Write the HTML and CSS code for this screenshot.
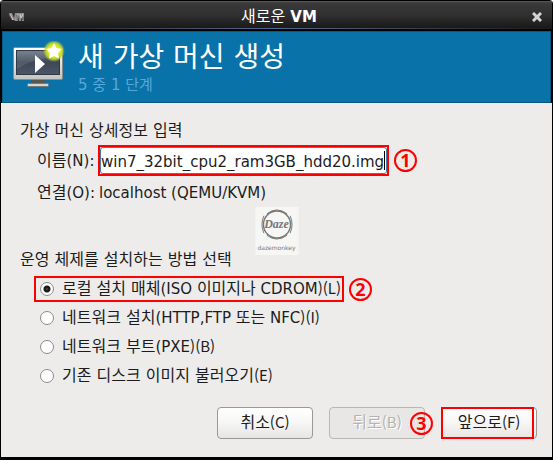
FILE: index.html
```html
<!DOCTYPE html>
<html lang="ko">
<head>
    <meta charset="UTF-8" />
    <meta name="viewport" content="width=device-width, initial-scale=1.0"/>
    <title>새로운 VM</title>
    <link rel="stylesheet" href="styles.css">
</head>
<body>

    <div class="window">
        <!-- Title bar -->
        <div class="titlebar">
            <svg class="app-icon" width="18" height="12" viewBox="0 0 18 12" fill="none">
                <path d="M1 2h3l2 5 1-5h9v8h-2V5l-1 5h-2l-1-5v5H7L6 9H4z" fill="#8b8b8b"/>
                <path d="M2 3l3 6M8 9l2-6M12 3l1 4 2-4" stroke="#cfcfcf"/>
                <path d="M1 3l2 4" stroke="#a5505f"/>
                <path d="M9 4v5M15 6v3" stroke="#555"/>
            </svg>
            <div class="window-title">새로운 <b>VM</b></div>
            <button class="close" type="button" aria-label="닫기">
                <svg width="10" height="10" viewBox="0 0 10 10">
                    <path d="M1 1L9 9M9 1L1 9" stroke="#d4d4d4" stroke-width="3"/>
                </svg>
            </button>
        </div>

        <!-- Wizard header -->
        <div class="header">
            <svg class="monitor" width="54" height="50" viewBox="0 0 54 50">
                <defs>
                    <linearGradient id="frame" x1="0" y1="0" x2="0" y2="1">
                        <stop offset="0" stop-color="#ffffff"/>
                        <stop offset="1" stop-color="#c4c4c0"/>
                    </linearGradient>
                    <linearGradient id="screen" x1="0" y1="0" x2="0" y2="1">
                        <stop offset="0" stop-color="#6a7482"/>
                        <stop offset="0.5" stop-color="#3e4857"/>
                        <stop offset="1" stop-color="#4b5666"/>
                    </linearGradient>
                    <radialGradient id="glow">
                        <stop offset="0.5" stop-color="#e6ec1c"/>
                        <stop offset="0.75" stop-color="#c0d52c" stop-opacity="0.9"/>
                        <stop offset="1" stop-color="#9cc840" stop-opacity="0"/>
                    </radialGradient>
                </defs>
                <path d="M18 39h14v4H18z" fill="#555753"/>
                <rect x="14.5" y="42.5" width="21" height="3" rx="1" fill="#d5d5d2" stroke="#777974"/>
                <rect x="0.5" y="6.5" width="49" height="32" rx="1.5" fill="url(#frame)" stroke="#8a8c88"/>
                <rect x="3.5" y="9.5" width="43" height="24" fill="url(#screen)" stroke="#303846"/>
                <path d="M4 10h42v6Q22 16 4 28z" fill="#fff" opacity="0.1"/>
                <path d="M22 14L32 23L22 32z" fill="#fff"/>
                <circle cx="41" cy="10" r="11" fill="url(#glow)"/>
                <path d="M41 2l2.5 5 5.5 1-4 4 1 5.5-5-2.5-5 2.5 1-5.5-4-4 5.5-1z" fill="#fff"/>
            </svg>
            <div>
                <h1>새 가상 머신 생성</h1>
                <p class="step">5 중 1 단계</p>
            </div>
        </div>

        <form class="content">
            <h2>가상 머신 상세정보 입력</h2>
            <div class="row name-row">
                <label class="label" for="name">이름<span class="latin">(N):</span></label>
                <div class="highlight name-box">
                    <input id="name" type="text" value="win7_32bit_cpu2_ram3GB_hdd20.img">
                    <span class="caret"></span>
                </div>
                <span class="badge">1</span>
            </div>
            <div class="row">
                <span class="label">연결<span class="latin">(O):</span></span>
                <span class="latin connection">localhost (QEMU/KVM)</span>
            </div>

            <!-- Watermark -->
            <div class="watermark">
                <svg width="33" height="34" viewBox="0 0 33 34" fill="none" stroke="#777">
                    <circle cx="16.5" cy="17" r="14" stroke-width="1.5"/>
                    <path d="M6 6Q16 -2 27 6M6 28Q16 36 27 28M3 8Q-1 17 3 26M30 8Q34 17 30 26"/>
                </svg>
                <span class="script">Daze</span>
                <span class="brand">dazemonkey</span>
            </div>

            <h2 class="install-title">운영 체제를 설치하는 방법 선택</h2>
            <div class="options">
                <div class="row">
                    <label class="option highlight"><input type="radio" name="method" checked><span>로컬 설치 매체<span class="latin">(ISO </span>이미지나<span class="latin"> CDROM</span><span class="key">)(L)</span></span></label>
                    <span class="badge">2</span>
                </div>
                <label class="option"><input type="radio" name="method"><span>네트워크 설치<span class="latin">(HTTP,FTP </span>또는<span class="latin"> NFC</span><span class="key">)(I)</span></span></label>
                <label class="option"><input type="radio" name="method"><span>네트워크 부트<span class="latin">(PXE</span><span class="key">)(B)</span></span></label>
                <label class="option"><input type="radio" name="method"><span>기존 디스크 이미지 불러오기<span class="key">(E)</span></span></label>
            </div>

            <div class="actions">
                <button class="btn" type="button">취소<span class="key">(C)</span></button>
                <button class="btn" type="button" disabled>뒤로<span class="key">(B)</span></button>
                <div class="next">
                    <button class="btn" type="button">앞으로<span class="key">(F)</span></button>
                    <span class="badge">3</span>
                </div>
            </div>
        </form>
    </div>

</body>
</html>
```
FILE: styles.css
```css
:root {
    --bg: #edeceb;
    --header: #0872a9;
    --mark: #ff0000;
    --text: #1c1c1c;
}

* {
    box-sizing: border-box;
}

body {
    margin: 0;
    background: #fff;
    color: var(--text);
    font-family: "DejaVu Sans", "Noto Sans CJK KR", sans-serif;
    font-size: 16px;
    line-height: 24px;
}

h1, h2, p {
    margin: 0;
    font-weight: 400;
}

h2 {
    font-size: 16px;
    line-height: 24px;
}

/* Latin letters run a little smaller than the Hangul beside them */
.latin {
    font-size: 15px;
}

/* Shortcut letter with narrow brackets */
.key {
    font-family: "Noto Sans CJK KR", sans-serif;
    font-size: 15px;
    line-height: 20px;
}

.window {
    background: #000;
    border-radius: 4px 4px 0 0;
    padding: 1px 1px 3px;
    overflow: hidden;
}

/* Title bar */
.titlebar {
    display: flex;
    align-items: center;
    height: 30px;
    padding: 2px 10px 0 7px;
    background:
        linear-gradient(to right, #1a1a1a, #536b94 50%, #1a1a1a) 0 27px / 100% 1px no-repeat,
        linear-gradient(#5a5a5a 0, #3a3a3a 2px, #303030 14px, #191919 27px, #000 29px);
    color: #fff;
}

.window-title {
    flex: 1;
    text-align: center;
}

.window-title b {
    font-size: 15px;
}

.close {
    display: flex;
    padding: 0;
    border: 0;
    background: none;
}

/* Blue wizard header */
.header {
    display: flex;
    gap: 11px;
    height: 72px;
    margin: 0 1px;
    padding: 9px 10px;
    background: var(--header);
    border: 1px solid #075984;
    color: #fff;
}

h1 {
    font-size: 28px;
    line-height: 34px;
}

.step {
    color: #55a9da;
    font-size: 15px;
    line-height: 20px;
}

/* Form */
.content {
    position: relative;
    padding: 16px 15px 18px 19px;
    background: var(--bg);
}

.row {
    display: flex;
    align-items: center;
    gap: 5px;
}

.name-row {
    margin: 2px 0 5px;
}

.label {
    width: 73px;
    padding-left: 17px;
    white-space: nowrap;
}

.connection {
    padding-left: 1px;
}

.highlight {
    border: 2px solid var(--mark);
}

.name-box {
    display: flex;
    align-items: center;
    position: relative;
    width: 291px;
}

.name-box input {
    display: block;
    width: 100%;
    height: 27px;
    padding: 2px 3px 0 0;
    border: 1px solid #4a78ad;
    border-radius: 3px;
    outline: 0;
    background: #fff;
    color: var(--text);
    font-family: inherit;
    font-size: 15px;
}

.caret {
    position: absolute;
    right: 2px;
    width: 1px;
    height: 19px;
    background: #000;
}

.badge {
    display: flex;
    align-items: center;
    justify-content: center;
    width: 23px;
    height: 23px;
    padding-bottom: 1px;
    border: 2px solid var(--mark);
    border-radius: 50%;
    color: var(--mark);
    font-family: "Open Sans", sans-serif;
    font-size: 18px;
    font-weight: 700;
    line-height: 18px;
}

.watermark {
    position: absolute;
    top: 104px;
    left: 50%;
    display: flex;
    flex-direction: column;
    align-items: center;
    width: 43px;
    height: 48px;
    padding-top: 1px;
    transform: translateX(-50%);
    background: #f6f6f4;
    color: #777;
}

.script {
    position: absolute;
    top: 9px;
    font-family: "Liberation Serif", serif;
    font-size: 12px;
    font-style: italic;
    font-weight: 700;
    line-height: 16px;
}

.brand {
    font-size: 6px;
    line-height: 14px;
}

.install-title {
    margin-top: 43px;
}

.options {
    display: flex;
    flex-direction: column;
    gap: 3px;
    margin: 4px 0 18px 14px;
}

.option {
    display: flex;
    align-items: center;
    gap: 8px;
    height: 26px;
    padding: 0 6px;
    white-space: nowrap;
}

.option.highlight {
    width: 310px;
    padding: 0 0 0 4px;
}

.option input {
    flex: none;
    appearance: none;
    width: 14px;
    height: 14px;
    margin: 0;
    border: 1px solid #8b8b87;
    border-radius: 50%;
    background: #fff;
}

.option input:checked {
    background: radial-gradient(circle at 50% 50%, #555 0, #111 2px, #222 3px, #fff 4px);
}

/* Bottom buttons */
.actions {
    display: flex;
    justify-content: flex-end;
    gap: 16px;
}

.btn {
    width: 96px;
    height: 32px;
    padding: 0;
    border: 1px solid #999895;
    border-radius: 4px;
    background: linear-gradient(#fff, #f6f6f5 50%, #e6e5e4);
    color: var(--text);
    font-family: inherit;
    font-size: 16px;
    line-height: 24px;
}

.btn:disabled {
    border-color: #b8b7b4;
    background: #e8e7e6;
    color: #b4b3b0;
    text-shadow: 1px 1px #fff;
}

.next {
    position: relative;
}

/* Callout frame drawn over the button */
.next::after {
    content: "";
    position: absolute;
    inset: 0 3px 0 0;
    border: 2px solid var(--mark);
}

.next .badge {
    position: absolute;
    top: 5px;
    left: -31px;
}
```
